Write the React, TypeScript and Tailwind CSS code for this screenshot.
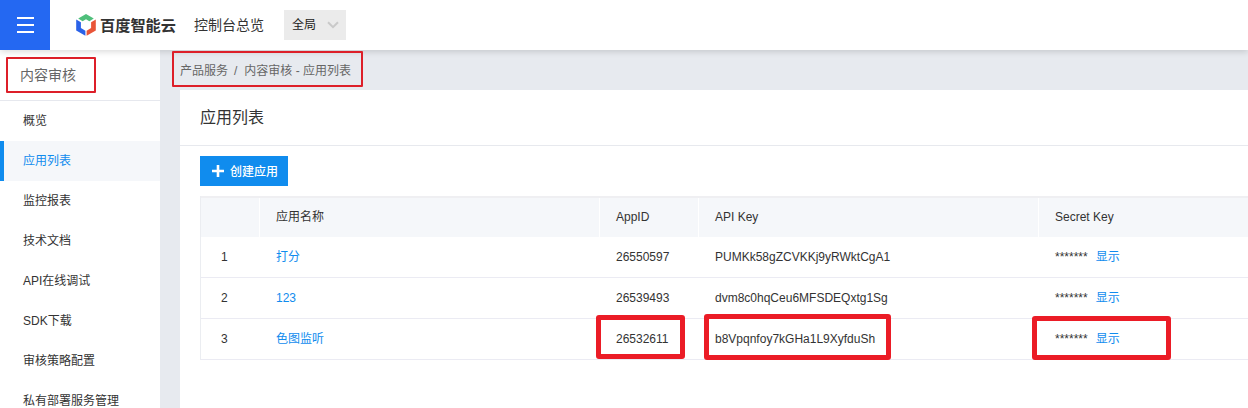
import React from "react";

const menu = ["概览", "应用列表", "监控报表", "技术文档", "API在线调试", "SDK下载", "审核策略配置", "私有部署服务管理"];

const apps = [
  { name: "打分", id: "26550597", key: "PUMKk58gZCVKKj9yRWktCgA1" },
  { name: "123", id: "26539493", key: "dvm8c0hqCeu6MFSDEQxtg1Sg" },
  { name: "色图监听", id: "26532611", key: "b8Vpqnfoy7kGHa1L9XyfduSh" },
];

const columns = "grid grid-cols-[59px_340px_99px_340px_1fr]";

function Logo() {
  return (
    <svg className="ml-[26px] h-[22px] w-5 shrink-0" viewBox="0 0 20 22">
      <path d="M10 0 17.8 4.4 13.4 7.2 10 5.2 6.6 7.2 2.2 4.4Z" fill="#4fbf7b" />
      <path d="M.2 5.4 4.9 8.2V14L9.4 16.7V21.8L.2 16.6Z" fill="#2a62e8" />
      <path d="M19.8 5.4 15.1 8.2V14L10.6 16.7V21.8L19.8 16.6Z" fill="#e95538" />
    </svg>
  );
}

function Header() {
  return (
    <header className="relative z-10 flex h-[50px] items-center bg-white shadow-[0_2px_6px_rgba(0,0,0,0.14)]">
      <button className="flex h-[50px] w-[50px] shrink-0 flex-col justify-center gap-[5px] bg-[#2468f2] pl-[17px]">
        <span className="h-[2px] w-[17px] bg-white" />
        <span className="h-[2px] w-[17px] bg-white" />
        <span className="h-[2px] w-[17px] bg-white" />
      </button>
      <Logo />
      <span className="ml-1 w-[76px] pt-px text-[15.2px] leading-[22px] font-bold text-[#333]">百度智能云</span>
      <span className="ml-[18px] text-sm text-[#333]">控制台总览</span>
      <div className="ml-5 flex h-[30px] w-[62px] items-center justify-between bg-[#ebebeb] pr-[7px] pl-2 text-xs text-[#222]">
        全局
        <svg className="h-2 w-3" viewBox="0 0 12 8" fill="none" stroke="#c9c9c9" strokeWidth="2">
          <path d="M1 1.2 6 6.2 11 1.2" />
        </svg>
      </div>
    </header>
  );
}

function Sidebar() {
  return (
    <aside className="h-[358px] w-40 shrink-0 overflow-hidden bg-white">
      <div className="relative flex h-[51px] items-center border-b border-[#e6e8ee] pl-5 text-sm text-[#666]">
        内容审核
        <div className="absolute top-[7px] left-[6px] h-9 w-[90px] rounded-[1px] border-2 border-[#dd1f29]" />
      </div>
      {menu.map((item, i) => (
        <div
          key={item}
          className={
            i === 1
              ? "flex h-10 items-center border-l-4 border-[#108cee] bg-[#f5f7fa] pl-[19px] text-[#108cee]"
              : "flex h-10 items-center pl-[23px] text-[#333]"
          }
        >
          {item}
        </div>
      ))}
    </aside>
  );
}

function AppTable() {
  return (
    <div className="mt-[10px] ml-5 border-l border-[#ebedf1]">
      <div className={`${columns} h-[41px] border-t-2 border-[#efeff2] bg-[#f5f7fa] leading-[38px]`}>
        <div className="border-r border-white" />
        <div className="border-r border-white pl-4">应用名称</div>
        <div className="border-r border-white pl-4">AppID</div>
        <div className="border-r border-white pl-4">API Key</div>
        <div className="pl-4">Secret Key</div>
      </div>
      {apps.map((app, i) => (
        <div key={app.id} className={`${columns} h-[41px] border-b border-[#ebebf3] leading-10`}>
          <div className="pl-5">{i + 1}</div>
          <div className="pl-4 text-[#108cee]">{app.name}</div>
          <div className="relative pl-4">
            {app.id}
            {i === 2 && <div className="absolute -top-1 -left-1 h-11 w-[89px] rounded-[3px] border-[5px] border-[#eb1c26]" />}
          </div>
          <div className="relative pl-4">
            {app.key}
            {i === 2 && <div className="absolute -top-[5px] left-[5px] h-[46px] w-[187px] rounded-[3px] border-[5px] border-[#eb1c26]" />}
          </div>
          <div className="relative flex gap-2 pl-4">
            <span>*******</span>
            <span className="text-[#108cee]">显示</span>
            {i === 2 && <div className="absolute -top-[3px] -left-[7px] h-11 w-[139px] rounded-[3px] border-[5px] border-[#eb1c26]" />}
          </div>
        </div>
      ))}
    </div>
  );
}

export default function App() {
  return (
    <div className="h-[408px] w-[1248px] overflow-hidden bg-[#e7eaef] font-['Liberation_Sans','Noto_Sans_CJK_SC',sans-serif] text-xs text-[#333]">
      <Header />
      <div className="flex">
        <Sidebar />
        <main className="min-w-0 flex-1 pl-5">
          <div className="relative flex h-10 items-center pt-px text-[#666]">
            <span>产品服务</span>
            <span className="mr-[7px] ml-[6px]">/</span>
            <span>内容审核 - 应用列表</span>
            <div className="absolute top-[1px] -left-2 z-20 h-9 w-[191px] rounded-[1px] border-2 border-[#dd1f29]" />
          </div>
          <section className="h-[318px] bg-white">
            <h1 className="flex h-14 items-center border-b border-[#e7e9ee] pl-5 text-base text-[#333]">应用列表</h1>
            <button className="mt-[10px] ml-5 flex h-[30px] w-[88px] items-center gap-[6px] bg-[#108cee] pl-3 text-white">
              <svg className="h-3 w-3" viewBox="0 0 12 12" stroke="#fff" strokeWidth="2.6">
                <path d="M6 0V12M0 6H12" />
              </svg>
              <span className="pt-[2px] font-medium">创建应用</span>
            </button>
            <AppTable />
          </section>
        </main>
      </div>
    </div>
  );
}
